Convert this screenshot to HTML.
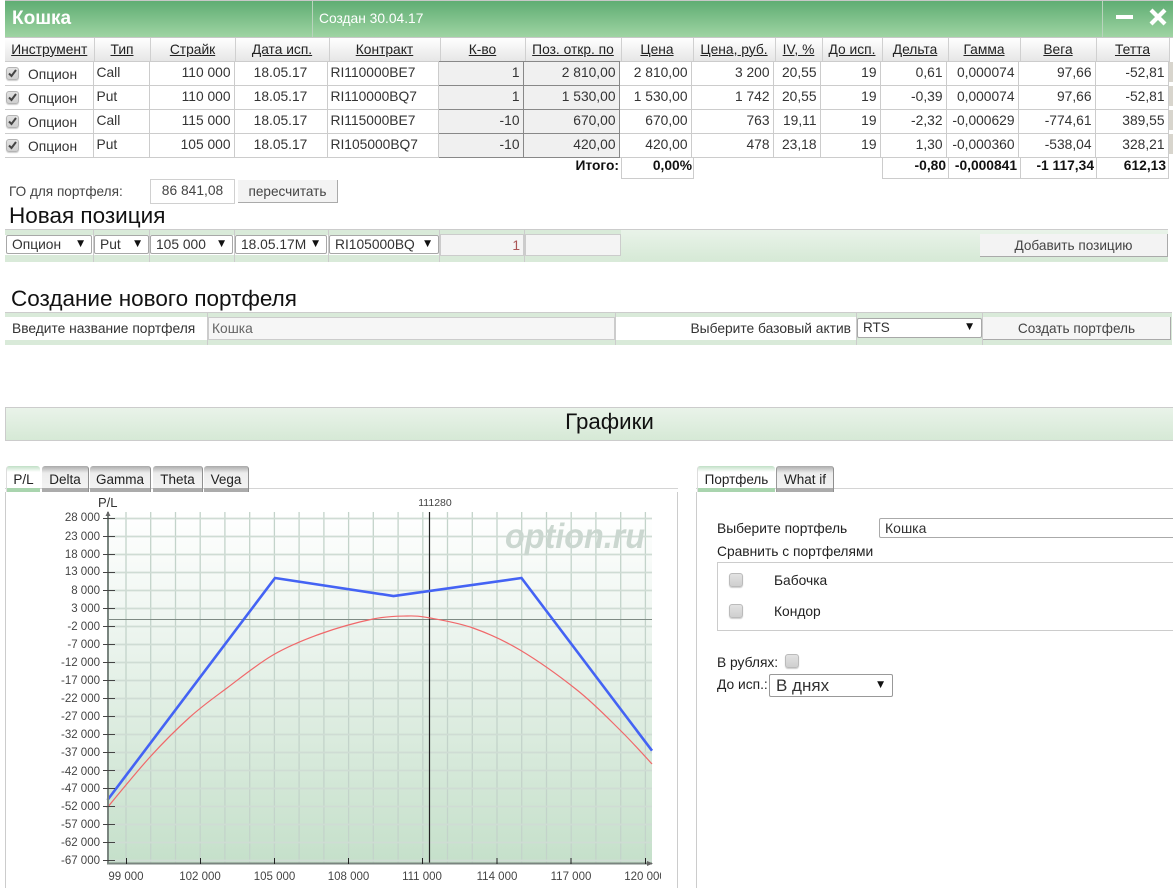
<!DOCTYPE html>
<html lang="ru"><head><meta charset="utf-8"><title>Кошка</title>
<style>
html,body{margin:0;padding:0;background:#fff;width:1173px;height:888px;overflow:hidden}
body{position:relative;font-family:"Liberation Sans",Arial,sans-serif;font-size:13.800px;color:#333}
.a{position:absolute;white-space:nowrap;box-sizing:border-box}
table{position:absolute;border-collapse:collapse;table-layout:fixed;font-size:13.800px}
#h{left:5px;top:38px;width:1164px}
#h td{box-sizing:border-box;height:23px;padding:0;text-align:center;text-decoration:underline;color:#222;border-right:1px solid #d0d0d0;background:linear-gradient(#fff,#e6e6e6);border-bottom:1px solid #ccc}
#b{left:5px;top:61px;width:1163px}
#b td{box-sizing:border-box;height:24px;line-height:16px;padding:0 3px 1px 3px;border:1px solid #ccc;text-align:right;color:#333;overflow:hidden;white-space:nowrap}
#b td.l{text-align:left}#b td.c{text-align:center}
#b td.i{background:#f0f0f0;border-color:#888}
#b td.f{border-left:0;padding:3px 0 0 23px;text-align:left}
.cb{position:absolute;left:6px;width:13px;height:13px;border-radius:3px;background:linear-gradient(#e2e2e2,#cfcfcf);border:1px solid #b4b4b4;box-sizing:border-box;box-shadow:0 1px 1px #ccc}
.cb svg{position:absolute;left:0;top:0}
.sel{position:absolute;box-sizing:border-box;background:#fff;border:1px solid #a8a8a8;border-radius:2px;height:19px;line-height:17px;padding-left:5px;white-space:nowrap;overflow:hidden;color:#333;font-size:13.800px}
.sel i{position:absolute;right:7px;top:0;font-style:normal;font-size:9px;color:#111;background:#fff;padding-left:2px;font-family:"DejaVu Sans",sans-serif}
.tab{position:absolute;top:466px;height:26px;box-sizing:border-box;text-align:center;line-height:27px;font-size:13.500px;color:#222;border-radius:3px 3px 0 0}
.on{background:linear-gradient(#c0dfc5 0,#fff 6px,#fff 22px,#a9d4ae 22px);border-left:1px solid #ddd}
.off{background:linear-gradient(#a9a9a9 0,#ececec 7px,#f3f3f3 22px,#ababab 22px);border-right:1px solid #8f8f8f}
</style></head><body>

<div class="a" style="left:5px;top:0;width:1168px;height:38px;background:#c8c8c8"></div>
<div class="a" style="left:5px;top:1px;width:1168px;height:36px;background:linear-gradient(#5fad73,#9fd4a3)"></div>
<div class="a" style="left:312px;top:1px;width:1px;height:36px;background:#b9d4bd"></div>
<div class="a" style="left:1102px;top:1px;width:1px;height:36px;background:#b9d4bd"></div>
<div class="a" style="left:12px;top:7px;font-size:19px;font-weight:bold;color:#fff;line-height:24px">Кошка</div>
<div class="a" style="left:319px;top:11px;font-size:13.800px;color:#fff;line-height:16px">Создан 30.04.17</div>
<div class="a" style="left:1116px;top:15px;width:17px;height:4px;background:#fff"></div>
<svg class="a" style="left:1149px;top:8px" width="18" height="18"><path d="M2 2L16 16M16 2L2 16" stroke="#fff" stroke-width="4.200"/></svg>

<table id="h"><colgroup><col style="width:89px"><col style="width:56px"><col style="width:85px"><col style="width:94px"><col style="width:111px"><col style="width:85px"><col style="width:96px"><col style="width:72px"><col style="width:82px"><col style="width:47px"><col style="width:60px"><col style="width:66px"><col style="width:72px"><col style="width:76px"><col style="width:73px"></colgroup>
<tr><td>Инструмент</td><td>Тип</td><td>Страйк</td><td>Дата исп.</td><td>Контракт</td><td>К-во</td><td>Поз. откр. по</td><td>Цена</td><td>Цена, руб.</td><td>IV, %</td><td>До исп.</td><td>Дельта</td><td>Гамма</td><td>Вега</td><td>Тетта</td></tr></table>

<table id="b"><colgroup><col style="width:88px"><col style="width:56px"><col style="width:85px"><col style="width:93px"><col style="width:111px"><col style="width:85px"><col style="width:96px"><col style="width:72px"><col style="width:82px"><col style="width:47px"><col style="width:60px"><col style="width:66px"><col style="width:72px"><col style="width:77px"><col style="width:73px"></colgroup>
<tr><td class="f">Опцион</td><td class="l">Call</td><td>110 000</td><td class="c">18.05.17</td><td class="l">RI110000BE7</td><td class="i">1</td><td class="i">2 810,00</td><td>2 810,00</td><td>3 200</td><td>20,55</td><td>19</td><td>0,61</td><td>0,000074</td><td>97,66</td><td>-52,81</td></tr>
<tr><td class="f">Опцион</td><td class="l">Put</td><td>110 000</td><td class="c">18.05.17</td><td class="l">RI110000BQ7</td><td class="i">1</td><td class="i">1 530,00</td><td>1 530,00</td><td>1 742</td><td>20,55</td><td>19</td><td>-0,39</td><td>0,000074</td><td>97,66</td><td>-52,81</td></tr>
<tr><td class="f">Опцион</td><td class="l">Call</td><td>115 000</td><td class="c">18.05.17</td><td class="l">RI115000BE7</td><td class="i">-10</td><td class="i">670,00</td><td>670,00</td><td>763</td><td>19,11</td><td>19</td><td>-2,32</td><td>-0,000629</td><td>-774,61</td><td>389,55</td></tr>
<tr><td class="f">Опцион</td><td class="l">Put</td><td>105 000</td><td class="c">18.05.17</td><td class="l">RI105000BQ7</td><td class="i">-10</td><td class="i">420,00</td><td>420,00</td><td>478</td><td>23,18</td><td>19</td><td>1,30</td><td>-0,000360</td><td>-538,04</td><td>328,21</td></tr>
</table>

<div class="cb" style="top:67px"><svg width="11" height="11"><path d="M2 5.500L4.500 8L9 2" fill="none" stroke="#444" stroke-width="2"/></svg></div>
<div class="cb" style="top:91px"><svg width="11" height="11"><path d="M2 5.500L4.500 8L9 2" fill="none" stroke="#444" stroke-width="2"/></svg></div>
<div class="cb" style="top:115px"><svg width="11" height="11"><path d="M2 5.500L4.500 8L9 2" fill="none" stroke="#444" stroke-width="2"/></svg></div>
<div class="cb" style="top:139px"><svg width="11" height="11"><path d="M2 5.500L4.500 8L9 2" fill="none" stroke="#444" stroke-width="2"/></svg></div>
<div class="a" style="left:1169px;top:62px;width:4px;height:20px;background:#d8d5cd"></div>
<div class="a" style="left:1169px;top:86px;width:4px;height:20px;background:#d8d5cd"></div>
<div class="a" style="left:1169px;top:110px;width:4px;height:20px;background:#d8d5cd"></div>
<div class="a" style="left:1169px;top:134px;width:4px;height:20px;background:#d8d5cd"></div>

<div class="a" style="left:621px;top:157px;width:73px;height:22px;border:1px solid #ccc;border-top:0"></div>
<div class="a" style="left:882px;top:157px;width:287px;height:22px;border:1px solid #ccc;border-top:0"></div>
<div class="a" style="left:948px;top:157px;width:1px;height:21px;background:#ccc"></div>
<div class="a" style="left:1020px;top:157px;width:1px;height:21px;background:#ccc"></div>
<div class="a" style="left:1096px;top:157px;width:1px;height:21px;background:#ccc"></div>
<div class="a" style="right:554px;top:158px;line-height:16px;font-weight:bold;color:#111">Итого:</div>
<div class="a" style="right:481px;top:158px;line-height:16px;font-weight:bold;color:#111">0,00%</div>
<div class="a" style="right:227px;top:158px;line-height:16px;font-weight:bold;color:#111">-0,80</div>
<div class="a" style="right:156px;top:158px;line-height:16px;font-weight:bold;color:#111">-0,000841</div>
<div class="a" style="right:79px;top:158px;line-height:16px;font-weight:bold;color:#111">-1 117,34</div>
<div class="a" style="right:7px;top:158px;line-height:16px;font-weight:bold;color:#111">612,13</div>

<div class="a" style="left:9px;top:184px;line-height:16px;color:#444;font-size:13.600px">ГО для портфеля:</div>
<div class="a" style="left:150px;top:179px;width:85px;height:25px;border:1px solid #d0d0d0;line-height:22px;text-align:center;color:#444">86 841,08</div>
<div class="a" style="left:238px;top:180px;width:100px;height:23px;background:#f3f3f3;border-right:1px solid #aaa;border-bottom:1px solid #aaa;line-height:23px;text-align:center;color:#444;font-size:13.600px">пересчитать</div>
<div class="a" style="left:9px;top:203px;font-size:22.500px;line-height:26px;color:#111">Новая позиция</div>

<!-- new position -->
<div class="a" style="left:5px;top:229px;width:1163px;height:33px;background:#d9ead9;border-top:1px solid #ccc"></div>
<div class="a" style="left:5px;top:235px;width:616px;height:20px;background:#fff"></div>
<div class="a" style="left:621px;top:230px;width:547px;height:31px;background:linear-gradient(#e9f3e9,#d6e9d6)"></div>
<div class="a" style="left:93px;top:229px;width:1px;height:33px;background:#ccc"></div>
<div class="a" style="left:149px;top:229px;width:1px;height:33px;background:#ccc"></div>
<div class="a" style="left:234px;top:229px;width:1px;height:33px;background:#ccc"></div>
<div class="a" style="left:328px;top:229px;width:1px;height:33px;background:#ccc"></div>
<div class="a" style="left:439px;top:229px;width:1px;height:33px;background:#ccc"></div>
<div class="a" style="left:524px;top:229px;width:1px;height:33px;background:#ccc"></div>
<div class="sel" style="left:6px;top:235px;width:86px">Опцион<i>▼</i></div>
<div class="sel" style="left:94px;top:235px;width:55px">Put<i>▼</i></div>
<div class="sel" style="left:150px;top:235px;width:83px">105 000<i>▼</i></div>
<div class="sel" style="left:235px;top:235px;width:92px">18.05.17М<i style="padding-left:4px">▼</i></div>
<div class="sel" style="left:329px;top:235px;width:110px">RI105000BQ<i>▼</i></div>
<div class="a" style="left:440px;top:234px;width:84px;height:22px;background:#f4f4f4;border:1px solid #ccc;text-align:right;padding-right:3px;line-height:21px;color:#a55">1</div>
<div class="a" style="left:525px;top:234px;width:96px;height:22px;background:#f4f4f4;border:1px solid #ccc"></div>
<div class="a" style="left:980px;top:234px;width:188px;height:23px;background:#f3f3f3;border-right:1px solid #aaa;border-bottom:1px solid #aaa;line-height:24px;text-align:center;color:#444;font-size:13.600px">Добавить позицию</div>

<!-- create portfolio -->
<div class="a" style="left:11px;top:286px;font-size:22.500px;line-height:26px;color:#111">Создание нового портфеля</div>
<div class="a" style="left:5px;top:312px;width:1167px;height:33px;background:#d9ead9;border-top:1px solid #ccc"></div>
<div class="a" style="left:5px;top:317px;width:202px;height:23px;background:#fff;line-height:24px;padding-left:7px;color:#333">Введите название портфеля</div>
<div class="a" style="left:207px;top:312px;width:1px;height:33px;background:#ccc"></div>
<div class="a" style="left:208px;top:317px;width:407px;height:23px;background:#f6f6f6;border:1px solid #ccc;line-height:21px;padding-left:3px;color:#666">Кошка</div>
<div class="a" style="left:615px;top:312px;width:1px;height:33px;background:#ccc"></div>
<div class="a" style="left:616px;top:317px;width:240px;height:23px;background:#fff;line-height:24px;text-align:right;padding-right:5px;color:#333">Выберите базовый актив</div>
<div class="a" style="left:856px;top:312px;width:1px;height:33px;background:#ccc"></div>
<div class="sel" style="left:857px;top:318px;width:125px;height:20px;padding-left:5px;line-height:17px;font-size:13.500px">RTS<i style="right:8px">▼</i></div>
<div class="a" style="left:982px;top:312px;width:1px;height:33px;background:#ccc"></div>
<div class="a" style="left:983px;top:317px;width:188px;height:23px;background:#f5f5f5;border-right:1px solid #aaa;border-bottom:1px solid #aaa;line-height:23px;text-align:center;color:#444;font-size:13.600px">Создать портфель</div>

<!-- graphs header -->
<div class="a" style="left:5px;top:407px;width:1168px;height:34px;background:linear-gradient(#e9f3e9,#d6e9d6);border:1px solid #ccc;border-right:0;font-size:22.300px;line-height:28px;text-align:center;color:#111;padding-left:40px">Графики</div>

<!-- left tabs -->
<div class="a" style="left:5px;top:488px;width:673px;height:1px;background:#d4d4d4"></div>
<div class="tab on" style="left:6px;width:34px">P/L</div>
<div class="tab off" style="left:42px;width:47px">Delta</div>
<div class="tab off" style="left:90px;width:61px">Gamma</div>
<div class="tab off" style="left:153px;width:50px">Theta</div>
<div class="tab off" style="left:204px;width:45px">Vega</div>
<div class="a" style="left:5px;top:492px;width:1px;height:396px;background:#ccc"></div>
<div class="a" style="left:677px;top:492px;width:1px;height:396px;background:#ccc"></div>

<!-- chart -->
<svg class="a" style="left:0;top:489px" width="661" height="399" viewBox="0 489 661 399" font-family="Liberation Sans, Arial, sans-serif">
<defs><linearGradient id="bg" x1="0" y1="0" x2="0" y2="1"><stop offset="0" stop-color="#fff"/><stop offset=".3" stop-color="#eff6f1"/><stop offset="1" stop-color="#c5e0ca"/></linearGradient></defs>
<rect x="108" y="512" width="544" height="351" fill="url(#bg)"/>
<path d="M126 512V863M150.700 512V863M175.500 512V863M200.200 512V863M224.900 512V863M249.700 512V863M274.400 512V863M299.100 512V863M323.900 512V863M348.600 512V863M373.300 512V863M398.100 512V863M422.800 512V863M447.500 512V863M472.300 512V863M497 512V863M521.700 512V863M546.500 512V863M571.200 512V863M595.900 512V863M620.700 512V863M645.400 512V863" stroke="#c3d3ca" stroke-width="1.300" fill="none"/>
<path d="M108 518.500H652M108 536.500H652M108 554.500H652M108 572.500H652M108 590.500H652M108 608.500H652M108 626.500H652M108 644.500H652M108 662.500H652M108 680.500H652M108 698.500H652M108 716.500H652M108 734.500H652M108 752.500H652M108 770.500H652M108 788.500H652M108 806.500H652M108 824.500H652M108 842.500H652M108 860.500H652" stroke="#cfdcd4" stroke-width="1.800" fill="none"/>
<text x="505" y="548" font-size="35" font-weight="bold" font-style="italic" fill="#cbd7d0" textLength="140" lengthAdjust="spacingAndGlyphs">option.ru</text>
<path d="M108 619.500H652" stroke="#7f8a84" stroke-width="1"/>
<path d="M429.500 512V863" stroke="#222" stroke-width="1.200"/>
<path d="M107 808C114 799.500 136.200 772.200 150 757C163.800 741.800 177.200 728.500 190 717C202.800 705.500 213.200 698.300 227 688C240.800 677.700 257.500 664 273 655C288.500 646 303.300 640 320 634C336.700 628 358.500 622 373 619C387.500 616 397.500 616.200 407 616C416.500 615.800 419 616 430 618C441 620 458 622.700 473 628C488 633.300 502.700 639.700 520 650C537.300 660.300 560.300 676.700 577 690C593.700 703.300 607.500 717.700 620 730C632.500 742.300 646.700 758.300 652 764" fill="none" stroke="#f0686a" stroke-width="1.200"/>
<path d="M107.500 800L275 578L393.500 596L521.500 578L652 750.700" fill="none" stroke="#4463f4" stroke-width="2.600"/>
<path d="M108 512V864M107 863.500H652" stroke="#7a857f" stroke-width="2" fill="none"/>
<path d="M105.500 516L108 511L110.500 516ZM647 861L653 863.500L647 866Z" fill="#666"/>
<path d="M103 518.500H115M103 536.500H115M103 554.500H115M103 572.500H115M103 590.500H115M103 608.500H115M103 626.500H115M103 644.500H115M103 662.500H115M103 680.500H115M103 698.500H115M103 716.500H115M103 734.500H115M103 752.500H115M103 770.500H115M103 788.500H115M103 806.500H115M103 824.500H115M103 842.500H115M103 860.500H115" stroke="#444" stroke-width="1"/>
<path d="M126.500 858V864M200.500 858V864M274.500 858V864M348.500 858V864M422.500 858V864M497 858V864M571 858V864M645.500 858V864" stroke="#222" stroke-width="1"/>
<g font-size="11.500" fill="#444" text-anchor="end">
<text x="100" y="521">28 000</text><text x="100" y="540">23 000</text><text x="100" y="558">18 000</text><text x="100" y="575">13 000</text><text x="100" y="594">8 000</text><text x="100" y="612">3 000</text><text x="100" y="630">-2 000</text><text x="100" y="648">-7 000</text><text x="100" y="666">-12 000</text><text x="100" y="684">-17 000</text><text x="100" y="702">-22 000</text><text x="100" y="720">-27 000</text><text x="100" y="738">-32 000</text><text x="100" y="756">-37 000</text><text x="100" y="775">-42 000</text><text x="100" y="792">-47 000</text><text x="100" y="810">-52 000</text><text x="100" y="828">-57 000</text><text x="100" y="846">-62 000</text><text x="100" y="864">-67 000</text>
</g>
<g font-size="11.500" fill="#444" text-anchor="middle">
<text x="126" y="880">99 000</text><text x="200" y="880">102 000</text><text x="274.500" y="880">105 000</text><text x="348.500" y="880">108 000</text><text x="422" y="880">111 000</text><text x="497" y="880">114 000</text><text x="571" y="880">117 000</text><text x="645" y="880">120 000</text>
</g>
<text x="435" y="506" font-size="10.500" fill="#444" text-anchor="middle">111280</text>
<text x="98" y="507" font-size="13" fill="#333">P/L</text>
</svg>

<!-- right panel -->
<div class="a" style="left:696px;top:488px;width:477px;height:1px;background:#d4d4d4"></div>
<div class="tab on" style="left:697px;width:78px">Портфель</div>
<div class="tab off" style="left:776px;width:58px;border-left:1px solid #999">What if</div>
<div class="a" style="left:696px;top:492px;width:1px;height:396px;background:#ccc"></div>
<div class="a" style="left:717px;top:521px;line-height:16px;color:#222">Выберите портфель</div>
<div class="a" style="left:879px;top:518px;width:300px;height:20px;background:#fff;border:1px solid #aaa;border-radius:2px;line-height:19px;padding-left:5px;font-size:14px;color:#333">Кошка</div>
<div class="a" style="left:717px;top:544px;line-height:16px;color:#222">Сравнить с портфелями</div>
<div class="a" style="left:717px;top:562px;width:470px;height:69px;border:1px solid #ccc"></div>
<div class="a" style="left:729px;top:573px;width:14px;height:14px;border-radius:3px;background:linear-gradient(#e2e2e2,#cfcfcf);border:1px solid #bbb;box-shadow:0 1px 1px #ccc"></div>
<div class="a" style="left:774px;top:573px;line-height:16px;color:#222">Бабочка</div>
<div class="a" style="left:729px;top:604px;width:14px;height:14px;border-radius:3px;background:linear-gradient(#e2e2e2,#cfcfcf);border:1px solid #bbb;box-shadow:0 1px 1px #ccc"></div>
<div class="a" style="left:774px;top:604px;line-height:16px;color:#222">Кондор</div>
<div class="a" style="left:717px;top:655px;line-height:16px;color:#222">В рублях:</div>
<div class="a" style="left:785px;top:654px;width:14px;height:14px;border-radius:3px;background:linear-gradient(#e2e2e2,#cfcfcf);border:1px solid #bbb;box-shadow:0 1px 1px #ccc"></div>
<div class="a" style="left:717px;top:677px;line-height:16px;color:#222">До исп.:</div>
<div class="sel" style="left:769px;top:674px;width:124px;height:23px;line-height:22px;font-size:17px;padding-left:6px;border-color:#999">В днях<i style="right:8px;line-height:20px">▼</i></div>
</body></html>
